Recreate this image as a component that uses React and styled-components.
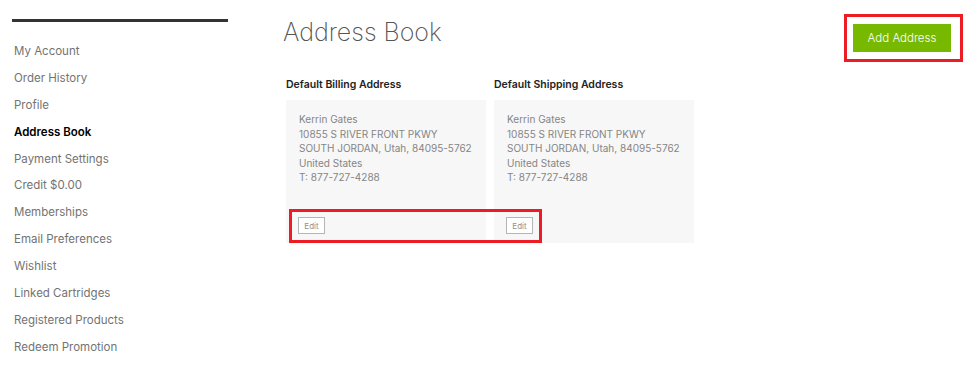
import React from "react";
import styled, { createGlobalStyle } from "styled-components";

const navItems = [
  "My Account",
  "Order History",
  "Profile",
  "Address Book",
  "Payment Settings",
  "Credit $0.00",
  "Memberships",
  "Email Preferences",
  "Wishlist",
  "Linked Cartridges",
  "Registered Products",
  "Redeem Promotion",
];

const address = [
  "Kerrin Gates",
  "10855 S RIVER FRONT PKWY",
  "SOUTH JORDAN, Utah, 84095-5762",
  "United States",
  "T: 877-727-4288",
];

const boxes = [
  { title: "Default Billing Address" },
  { title: "Default Shipping Address" },
];

export default function App() {
  return (
    <>
      <GlobalStyle />
      <Page>
        <Sidebar>
          <NavList>
            {navItems.map((item) => (
              <NavItem key={item} $active={item === "Address Book"}>
                {item}
              </NavItem>
            ))}
          </NavList>
        </Sidebar>
        <Main>
          <Header>
            <Title>Address Book</Title>
            <Highlight>
              <AddButton>Add Address</AddButton>
            </Highlight>
          </Header>
          <Boxes>
            {boxes.map((box) => (
              <Box key={box.title}>
                <BoxTitle>{box.title}</BoxTitle>
                <Card>
                  <Address>
                    {address.map((line) => (
                      <div key={line}>{line}</div>
                    ))}
                  </Address>
                  <EditButton>Edit</EditButton>
                </Card>
              </Box>
            ))}
            <EditHighlight />
          </Boxes>
        </Main>
      </Page>
    </>
  );
}

const GlobalStyle = createGlobalStyle`
  body {
    margin: 0;
    background: #fff;
    font-family: "Inter", "Open Sans", sans-serif;
  }
`;

const Page = styled.div`
  display: flex;
  width: 979px;
  height: 378px;
`;

const Sidebar = styled.aside`
  width: 216px;
  margin-left: 12px;
  padding-top: 19px;
  &::before {
    content: "";
    display: block;
    height: 3px;
    background: #333;
  }
`;

const NavList = styled.ul`
  list-style: none;
  margin: 16px 0 0;
  padding: 0 0 0 2px;
`;

const NavItem = styled.li`
  height: 26.9px;
  line-height: 27px;
  font-size: 11.5px;
  white-space: nowrap;
  color: ${(p) => (p.$active ? "#000" : "#737373")};
  font-weight: ${(p) => (p.$active ? 600 : 400)};
`;

const Main = styled.main`
  flex: 1;
  margin-left: 55px;
  margin-right: 16px;
`;

const Header = styled.div`
  display: flex;
  justify-content: space-between;
  align-items: flex-start;
  padding-top: 14px;
`;

const Title = styled.h1`
  margin: 0;
  font-size: 25px;
  line-height: 36px;
  font-weight: 200;
  color: #555;
`;

const Highlight = styled.div`
  border: 3px solid #ec1c24;
  padding: 7px 9px 7px 6px;
`;

const AddButton = styled.button`
  display: block;
  width: 98px;
  height: 28px;
  border: none;
  background: #76b900;
  color: #fff;
  font-family: inherit;
  font-size: 11.5px;
  font-weight: 300;
  padding: 0;
`;

const Boxes = styled.div`
  display: flex;
  gap: 8px;
  margin-top: 15px;
  margin-left: 3px;
  position: relative;
`;

const Box = styled.section`
  width: 200px;
`;

const BoxTitle = styled.h3`
  margin: 0 0 7px;
  height: 16px;
  line-height: 16px;
  font-size: 10.5px;
  font-weight: 600;
  color: #222;
  white-space: nowrap;
`;

const Card = styled.div`
  background: #f7f7f7;
  height: 143px;
  padding: 12px 12px 9px 13px;
  box-sizing: border-box;
  display: flex;
  flex-direction: column;
  justify-content: space-between;
  align-items: flex-start;
`;

const Address = styled.div`
  font-size: 10px;
  line-height: 14.6px;
  color: #858585;
  white-space: nowrap;
`;

const EditButton = styled.button`
  margin-left: -1px;
  width: 27px;
  height: 17px;
  padding: 0;
  background: #fff;
  border: 1px solid #b5b5b5;
  color: #909090;
  font-family: inherit;
  font-size: 8px;
`;

const EditHighlight = styled.div`
  position: absolute;
  left: 3px;
  top: 132px;
  width: 253px;
  height: 34px;
  box-sizing: border-box;
  border: 3px solid #ec1c24;
  pointer-events: none;
`;
